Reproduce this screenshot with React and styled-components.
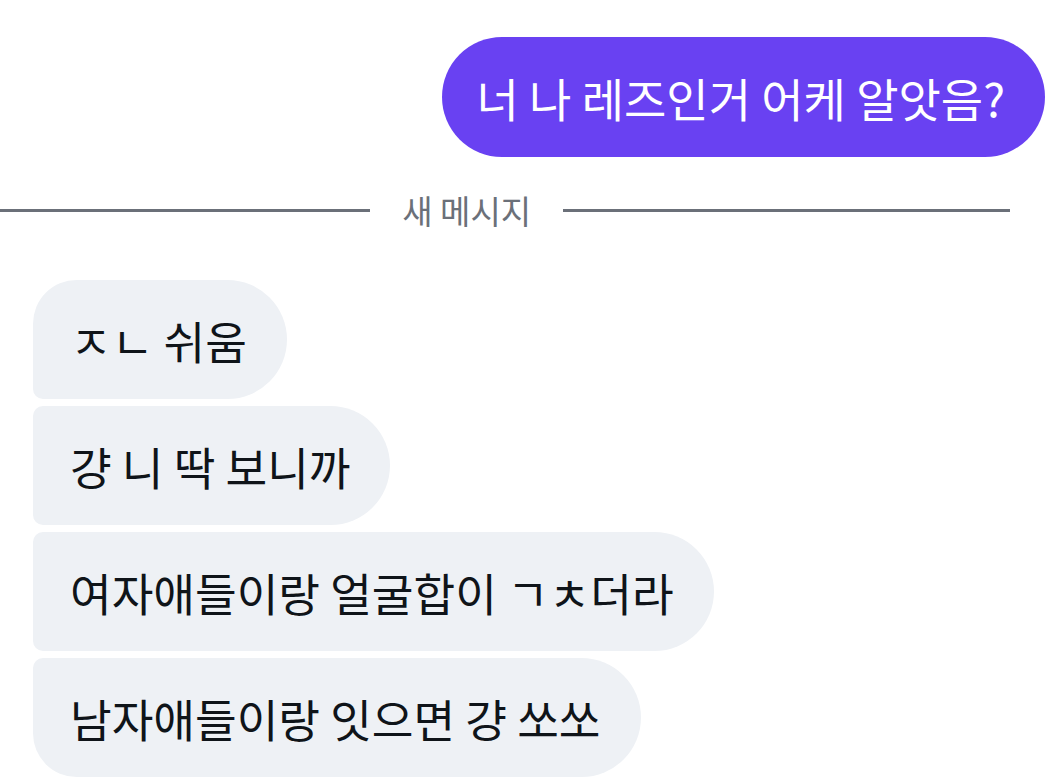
import React from "react";
import styled, { createGlobalStyle } from "styled-components";

const GlobalStyle = createGlobalStyle`
  html, body {
    margin: 0;
    padding: 0;
    background: #ffffff;
  }
  body {
    font-family: "Noto Sans CJK KR", "Noto Sans", sans-serif;
    -webkit-font-smoothing: antialiased;
  }
`;

const Thread = styled.div`
  display: flex;
  flex-direction: column;
  width: 1061px;
  height: 777px;
  overflow: hidden;
  padding-top: 37px;
  box-sizing: border-box;
`;

const SentBubble = styled.div`
  align-self: flex-end;
  margin-right: 16px;
  height: 120px;
  display: flex;
  align-items: center;
  padding: 0 40px 0 34px;
  border-radius: 60px;
  background: #6941f2;
  color: #ffffff;
  font-size: 46px;
  white-space: nowrap;
`;

const Divider = styled.div`
  display: flex;
  align-items: center;
  width: 1010px;
  margin-top: 31px;
  height: 44px;
`;

const Rule = styled.div`
  flex: ${(p) => p.$grow} 1 0;
  height: 3px;
  background: #6b7079;
`;

const DividerLabel = styled.span`
  padding: 0 32px;
  font-size: 33px;
  line-height: 44px;
  color: #6b7079;
  white-space: nowrap;
`;

const Received = styled.div`
  display: flex;
  flex-direction: column;
  align-items: flex-start;
  gap: 7px;
  margin-top: 48px;
  padding-left: 33px;
`;

const ReceivedBubble = styled.div`
  height: 119px;
  display: flex;
  align-items: center;
  padding: 0 40px 0 37px;
  background: #eef1f5;
  color: #0f1419;
  font-size: 45.3px;
  white-space: nowrap;
  border-radius: ${(p) => (p.$first ? "44px" : "10px")} 60px 60px
    ${(p) => (p.$last ? "44px" : "10px")};
`;

const messages = [
  "ㅈㄴ 쉬움",
  "걍 니 딱 보니까",
  "여자애들이랑 얼굴합이 ㄱㅊ더라",
  "남자애들이랑 잇으면 걍 쏘쏘",
];

export default function App() {
  return (
    <>
      <GlobalStyle />
      <Thread>
        <SentBubble>너 나 레즈인거 어케 알앗음?</SentBubble>
        <Divider>
          <Rule $grow={368} />
          <DividerLabel>새 메시지</DividerLabel>
          <Rule $grow={444} />
        </Divider>
        <Received>
          {messages.map((text, i) => (
            <ReceivedBubble
              key={i}
              $first={i === 0}
              $last={i === messages.length - 1}
            >
              {text}
            </ReceivedBubble>
          ))}
        </Received>
      </Thread>
    </>
  );
}
